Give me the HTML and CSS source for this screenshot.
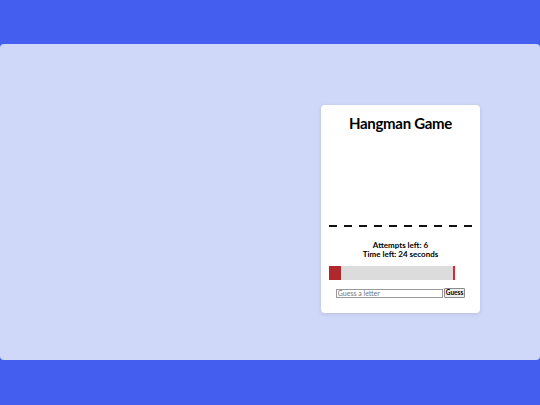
FILE: index.html
```html
<!DOCTYPE html>
<html lang="en">
<head>
<meta charset="utf-8">
<title>Hangman Game</title>
<link rel="stylesheet" href="styles.css">
</head>
<body>
<main class="stage">
  <section class="card">
    <h1 class="title">Hangman Game</h1>
    <div class="gallows"></div>
    <div class="word">
      <span class="slot"></span><span class="slot"></span><span class="slot"></span><span class="slot"></span><span class="slot"></span><span class="slot"></span><span class="slot"></span><span class="slot"></span><span class="slot"></span><span class="slot"></span>
    </div>
    <p class="info">Attempts left: 6<br>Time left: 24 seconds</p>
    <div class="timer"><div class="timer-fill" style="width:10%"></div></div>
    <form class="guess">
      <input class="guess-input" type="text" placeholder="Guess a letter">
      <button class="guess-btn" type="button">Guess</button>
    </form>
  </section>
</main>
</body>
</html>
```
FILE: styles.css
```css
html, body {
  margin: 0;
  padding: 0;
}
body {
  background: #445ef0;
  font-family: Lato, "Open Sans", sans-serif;
  height: 405px;
  padding-top: 44px;
  box-sizing: border-box;
}
.stage {
  background: #d0d8fa;
  border-radius: 4px;
  height: 316px;
  display: flex;
  justify-content: flex-end;
  align-items: flex-start;
  padding: 61px 60px 0 0;
  box-sizing: border-box;
}
.card {
  width: 159px;
  height: 208px;
  background: #ffffff;
  border-radius: 4px;
  box-shadow: 0 1px 4px rgba(0, 0, 0, 0.12);
  padding: 8px;
  box-sizing: border-box;
  display: flex;
  flex-direction: column;
  align-items: center;
}
.title {
  margin: 0;
  font-size: 15px;
  line-height: 20px;
  font-weight: 700;
  letter-spacing: -0.3px;
  color: #000;
}
.gallows {
  height: 92px;
}
.word {
  display: flex;
  gap: 7px;
}
.slot {
  width: 8px;
  height: 2px;
  background: #111;
}
.info {
  margin: 14px 0 0 0;
  font-size: 8px;
  line-height: 9px;
  font-weight: 700;
  text-align: center;
  color: #000;
}
.timer {
  align-self: flex-start;
  margin-top: 7px;
  width: 126px;
  height: 14px;
  background: #dcdcdc;
  border-right: 2px solid #e8222b;
  box-sizing: border-box;
}
.timer-fill {
  height: 100%;
  background: #b0282c;
}
.guess {
  margin: 8px 0 0 0;
  display: flex;
  align-items: center;
  gap: 1px;
}
.guess-input {
  width: 107px;
  height: 9px;
  box-sizing: border-box;
  border: 1px solid #9a9a9a;
  padding: 0 1px;
  font-family: Lato, "Open Sans", sans-serif;
  font-size: 7px;
  margin: 0;
}
.guess-input::placeholder {
  color: #777;
}
.guess-btn {
  height: 10px;
  padding: 0 1px;
  box-sizing: border-box;
  font-family: Lato, "Open Sans", sans-serif;
  font-size: 6.5px;
  font-weight: 700;
  line-height: 8px;
  border: 1px solid #8a8a8a;
  background: #efefef;
  border-radius: 1px;
  margin: 0;
}
```
